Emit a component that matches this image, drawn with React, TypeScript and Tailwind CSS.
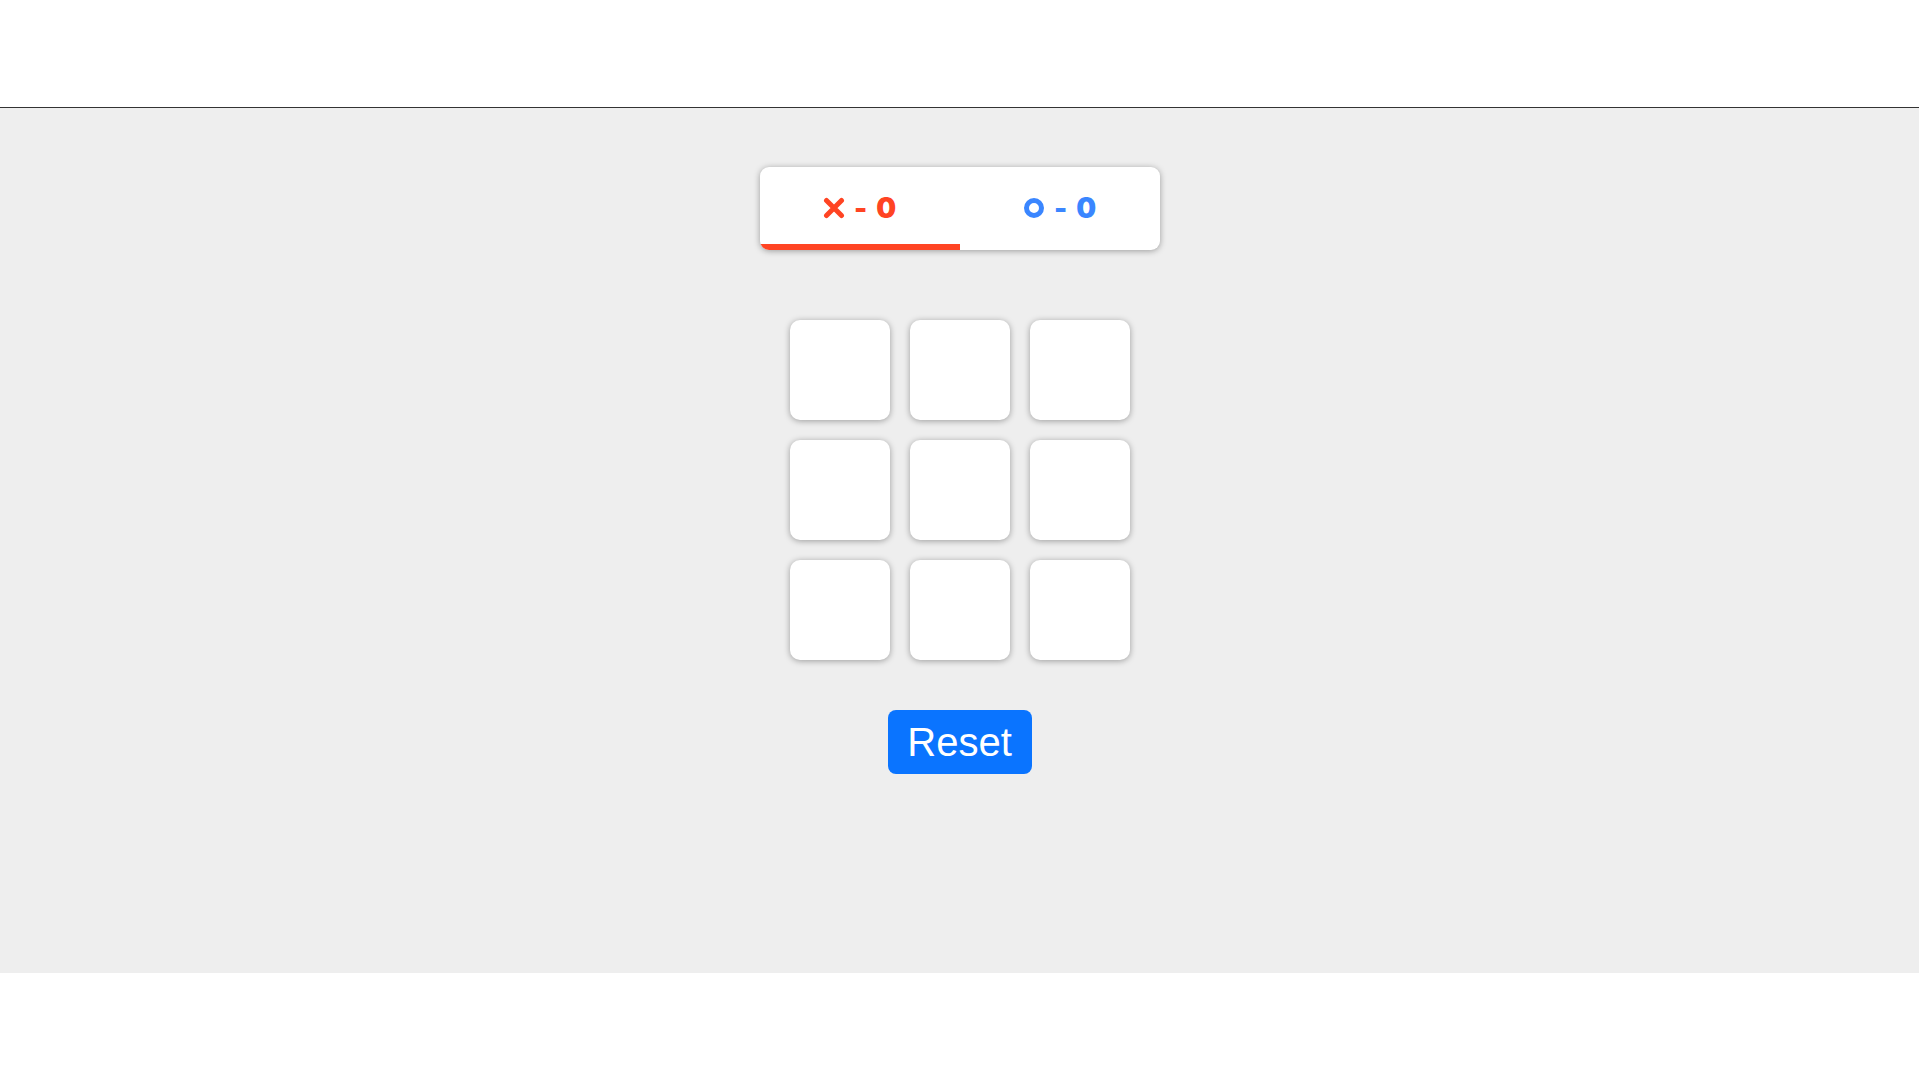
import React from "react";

function XMark() {
  return (
    <svg width="22" height="22" viewBox="0 0 22 22" className="block">
      <path d="M3.5 3.5 L18.5 18.5 M18.5 3.5 L3.5 18.5" stroke="#ff4423" strokeWidth="5" strokeLinecap="round" fill="none" />
    </svg>
  );
}

function OMark() {
  return (
    <svg width="22" height="22" viewBox="0 0 22 22" className="block">
      <circle cx="11" cy="11" r="7.5" stroke="#3a86ff" strokeWidth="5" fill="none" />
    </svg>
  );
}

export default function App() {
  const cells = Array.from({ length: 9 });
  return (
    <div className="w-[1919px] min-h-[1080px] bg-white" style={{ fontFamily: "'Liberation Sans', Arial, sans-serif" }}>
      <div className="h-[107px]" />
      <main className="h-[866px] bg-[#eeeeee] border-t border-[#333333] flex flex-col items-center pt-[59px]">
        <div className="w-[400px] h-[83px] bg-white rounded-[9px] shadow-[0_1px_6px_rgba(0,0,0,0.35)] overflow-hidden flex" style={{ fontFamily: "Inter, 'Noto Sans', sans-serif" }}>
          <div className="w-1/2 flex items-center justify-center gap-[9px] border-b-[6px] border-[#ff4423] text-[#ff4423] text-[28px] font-black pt-[4px]">
            <XMark />
            <span className="leading-none">-</span>
            <span className="leading-none">0</span>
          </div>
          <div className="w-1/2 flex items-center justify-center gap-[9px] border-b-[6px] border-transparent text-[#3a86ff] text-[28px] font-black pt-[4px]">
            <OMark />
            <span className="leading-none">-</span>
            <span className="leading-none">0</span>
          </div>
        </div>
        <div className="mt-[70px] grid grid-cols-[100px_100px_100px] gap-[20px]">
          {cells.map((_, i) => (
            <button
              key={i}
              className="w-[100px] h-[100px] bg-white rounded-[10px] shadow-[0_1px_6px_rgba(0,0,0,0.35)]"
            />
          ))}
        </div>
        <button className="mt-[50px] w-[144px] h-[64px] bg-[#0a74ff] text-white text-[40px] leading-none rounded-[8px] flex items-center justify-center">
          Reset
        </button>
      </main>
    </div>
  );
}
